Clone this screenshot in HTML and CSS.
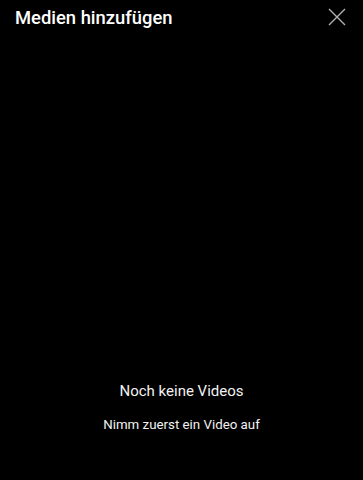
FILE: index.html
```html
<!DOCTYPE html>
<html lang="de">
<head>
<meta charset="utf-8">
<link rel="stylesheet" href="styles.css">
</head>
<body>
<div class="screen">
  <header class="bar">
    <h1 class="title">Medien hinzufügen</h1>
    <button class="close" aria-label="Schließen">
      <svg width="18" height="18" viewBox="0 0 18 18"><path d="M1 1L17 17M17 1L1 17" stroke="#b0b0b0" stroke-width="1.4" fill="none"/></svg>
    </button>
  </header>
  <main class="empty">
    <p class="empty-title">Noch keine Videos</p>
    <p class="empty-sub">Nimm zuerst ein Video auf</p>
  </main>
</div>
</body>
</html>
```
FILE: styles.css
```css
html, body { margin: 0; padding: 0; background: #000; }
.screen { width: 363px; height: 480px; display: flex; flex-direction: column; font-family: Roboto, "Noto Sans", sans-serif; color: #fff; }
.bar { display: flex; align-items: center; justify-content: space-between; height: 34px; padding: 0 17px 0 15px; }
.title { margin: 0; font-size: 18.4px; font-weight: 500; }
.close { background: none; border: 0; padding: 0; display: flex; }
.empty { flex: 1; display: flex; flex-direction: column; align-items: center; justify-content: flex-end; padding-bottom: 48px; }
.empty-title { margin: 0; font-size: 15px; color: #f2f2f2; }
.empty-sub { margin: 17px 0 0; font-size: 13.3px; color: #f2f2f2; }
```
